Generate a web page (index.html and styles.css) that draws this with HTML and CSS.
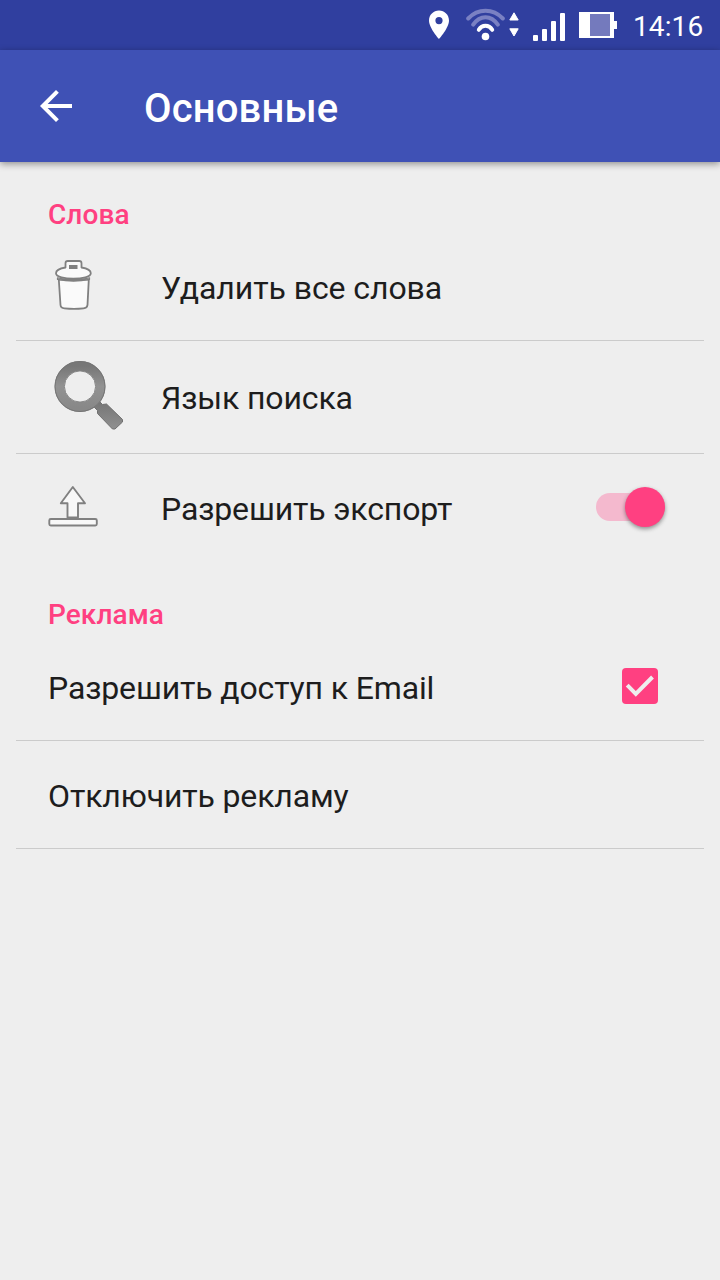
FILE: index.html
```html
<!DOCTYPE html>
<html lang="ru">
<head>
<meta charset="utf-8">
<title>Основные</title>
<link rel="stylesheet" href="styles.css">
</head>
<body>
<div class="status-bar">
  <svg class="pin" width="20" height="29" viewBox="429 10 20 29"><path fill="#fff" fill-rule="evenodd" d="M439 10.500c-5.600 0-10 4.400-10 10C429 28 439 39 439 39s10-11 10-18.500c0-5.600-4.400-10-10-10zm0 6.500a3.600 3.600 0 1 1 0 7.200 3.600 3.600 0 0 1 0-7.200z"/></svg>
  <svg class="wifi" width="54" height="34" viewBox="466 8 54 34">
    <g fill="none" stroke-width="4" stroke-linecap="round">
      <path stroke="#7a81c3" d="M468.200 18.500C478 8.200 493 8.200 502.800 18.500M473.200 24.700C480 14.800 491 14.800 497.800 24.700"/>
      <path stroke="#fff" d="M478.800 29.800C482 24.500 489 24.500 492.200 29.800"/>
    </g>
    <circle cx="485.500" cy="36.500" r="3.800" fill="#fff"/>
    <path fill="#fff" stroke="#fff" stroke-linejoin="round" d="M514 12.800l4.200 7.200h-8.400zM514 36l4.200-7.200h-8.400z"/>
  </svg>
  <svg class="signal" width="33" height="30" viewBox="533 12 33 30" fill="#fff"><rect x="533" y="35" width="5" height="6" rx="1"/><rect x="542" y="29" width="5" height="12" rx="1"/><rect x="551" y="21" width="5" height="20" rx="1"/><rect x="560" y="13" width="5" height="28" rx="1"/></svg>
  <svg class="battery" width="38" height="26" viewBox="579 12 38 26"><path fill="#fff" d="M579 12h35v9h3v8h-3v9h-35z"/><path fill="#747abd" d="M590 14h20v22h-20z"/></svg>
  <span class="clock">14:16</span>
</div>
<header class="toolbar">
  <svg class="back" width="32" height="32" viewBox="8 8 32 32"><path fill="#fff" d="M40 22H15.660L26.830 10.830 24 8 8 24l16 16 2.830-2.830L15.660 26H40v-4z"/></svg>
  <h1 class="title">Основные</h1>
</header>
<main class="settings">
  <h2 class="section-title">Слова</h2>
  <div class="row row-delete">
    <div class="icon-cell">
      <svg class="icon" width="82" height="60" viewBox="48 255 82 60" fill="#fafafa" stroke="#808080" stroke-width="1.800" stroke-linejoin="round">
        <path d="M58.800 279.500h30l-1.300 25.500q-.3 3-4 3.400-9.500 1-19 0-3.800-.4-4-3.400z"/>
        <path fill="#b4b4b4" stroke-width="1.200" d="M57.500 277.800q16 5 32 0v1.600q-16 3.500-32 0z"/>
        <path d="M65.500 267.500v-4.200q0-2.300 2.300-2.300h11.400q2.300 0 2.300 2.300v4.200c5 .8 9.300 2.500 9.300 5.700 0 7.300-34.800 7.300-34.800 0 0-3.200 4.500-4.900 9.500-5.700z"/>
        <path fill="#808080" stroke="none" d="M69 265h8.500v4H69z"/>
      </svg>
    </div>
    <span class="label">Удалить все слова</span>
  </div>
  <div class="row row-language">
    <div class="icon-cell">
      <svg class="icon" width="82" height="80" viewBox="48 356 82 80">
        <defs>
          <linearGradient id="lens" x1="0" y1="0" x2="0" y2="1"><stop offset="0" stop-color="#777"/><stop offset=".5" stop-color="#929292"/><stop offset="1" stop-color="#888"/></linearGradient>
          <linearGradient id="handle" x1="0" y1="0" x2="0" y2="1"><stop offset="0" stop-color="#747474"/><stop offset="1" stop-color="#909090"/></linearGradient>
        </defs>
        <path fill="url(#handle)" stroke="#707070" stroke-linejoin="round" d="M94 407l5-6 3.500 3.500 4-.5L122.500 419.500v2.500l-7.500 7h-2.500L97.500 413.500v-3z"/>
        <circle cx="80" cy="386.500" r="20.400" fill="none" stroke="url(#lens)" stroke-width="10"/>
        <circle cx="80" cy="386.500" r="25" fill="none" stroke="#747474" stroke-width="1"/>
        <circle cx="80" cy="386.500" r="15.600" fill="#eee" stroke="#858585" stroke-width="1"/>
      </svg>
    </div>
    <span class="label">Язык поиска</span>
  </div>
  <div class="row row-export">
    <div class="icon-cell">
      <svg class="icon" width="82" height="46" viewBox="48 484 82 46" fill="#f8f8f8" stroke="#808080" stroke-width="1.900" stroke-linejoin="round">
        <rect x="49.300" y="519" width="47.500" height="6.500" rx="1.500"/>
        <path d="M72.800 487l12.200 16.200h-7V517.500H67.500V503.200h-6.700z"/>
      </svg>
    </div>
    <span class="label">Разрешить экспорт</span>
    <div class="switch"><div class="thumb"></div></div>
  </div>
  <h2 class="section-title">Реклама</h2>
  <div class="row row-email">
    <span class="label">Разрешить доступ к Email</span>
    <div class="checkbox"><svg width="36" height="36" viewBox="0 0 36 36"><path fill="none" stroke="#eee" stroke-width="4" d="M5.200 17.200l8.600 8.600L30.500 9"/></svg></div>
  </div>
  <div class="row row-ads"><span class="label">Отключить рекламу</span></div>
</main>
</body>
</html>
```
FILE: styles.css
```css
* { box-sizing: border-box; }
body {
  margin: 0;
  min-height: 1280px;
  background: #eee;
  color: #1d1d1d;
  font-family: Roboto, sans-serif;
}
svg { display: block; flex: none; }
.status-bar {
  display: flex;
  align-items: flex-start;
  height: 50px;
  padding-left: 429px;
  background: #303f9f;
}
.pin { margin-top: 10px; }
.wifi { margin: 8px 0 0 17px; }
.signal { margin: 12px 0 0 13px; }
.battery { margin: 12px 0 0 13px; }
.clock {
  margin: 10px 0 0 16px;
  color: #fff;
  font-size: 28px;
  letter-spacing: .1px;
  line-height: 33px;
}
.toolbar {
  display: flex;
  align-items: center;
  height: 112px;
  padding-left: 40px;
  background: #3f51b5;
  box-shadow: 0 2px 7px rgba(0, 0, 0, .4);
}
.title {
  margin: 6px 0 0 72px;
  color: #fff;
  font-size: 40px;
  font-weight: 500;
  letter-spacing: .15px;
  line-height: 48px;
}
.settings { padding: 32px 16px 0; }
.section-title {
  height: 41px;
  margin: 0;
  padding-left: 32px;
  color: #ff4081;
  font-size: 28px;
  font-weight: 500;
  letter-spacing: .08px;
  line-height: 42px;
}
.row {
  display: flex;
  align-items: center;
  padding: 0 39px 0 32px;
  border-bottom: 1px solid #cbcbcb;
}
.icon-cell { width: 113px; }
.label {
  flex: 1;
  font-size: 32px;
  letter-spacing: -.14px;
  line-height: 38px;
  white-space: nowrap;
}
.row-delete { height: 106px; }
.row-delete .label { letter-spacing: -.07px; }
.row-delete .icon { margin-top: -6px; }
.row-language { height: 113px; padding-top: 2px; }
.row-language .icon { margin-top: -4px; }
.row-export { height: 110px; margin-bottom: 30px; border-bottom: 0; }
.row-export .icon { margin-top: -4px; }
.row-email { height: 106px; padding-right: 46px; }
.row-ads { height: 108px; padding-top: 2px; }
.switch {
  display: flex;
  justify-content: flex-end;
  align-items: center;
  width: 69px;
  height: 28px;
  margin-top: -4px;
  border-radius: 14px;
  background: #f4b9ce;
}
.thumb {
  width: 40px;
  height: 40px;
  border-radius: 50%;
  background: #ff4081;
  box-shadow: 0 2px 4px rgba(0, 0, 0, .4);
}
.checkbox {
  width: 36px;
  height: 36px;
  margin-top: -3px;
  border-radius: 4px;
  background: #ff4081;
}
```
